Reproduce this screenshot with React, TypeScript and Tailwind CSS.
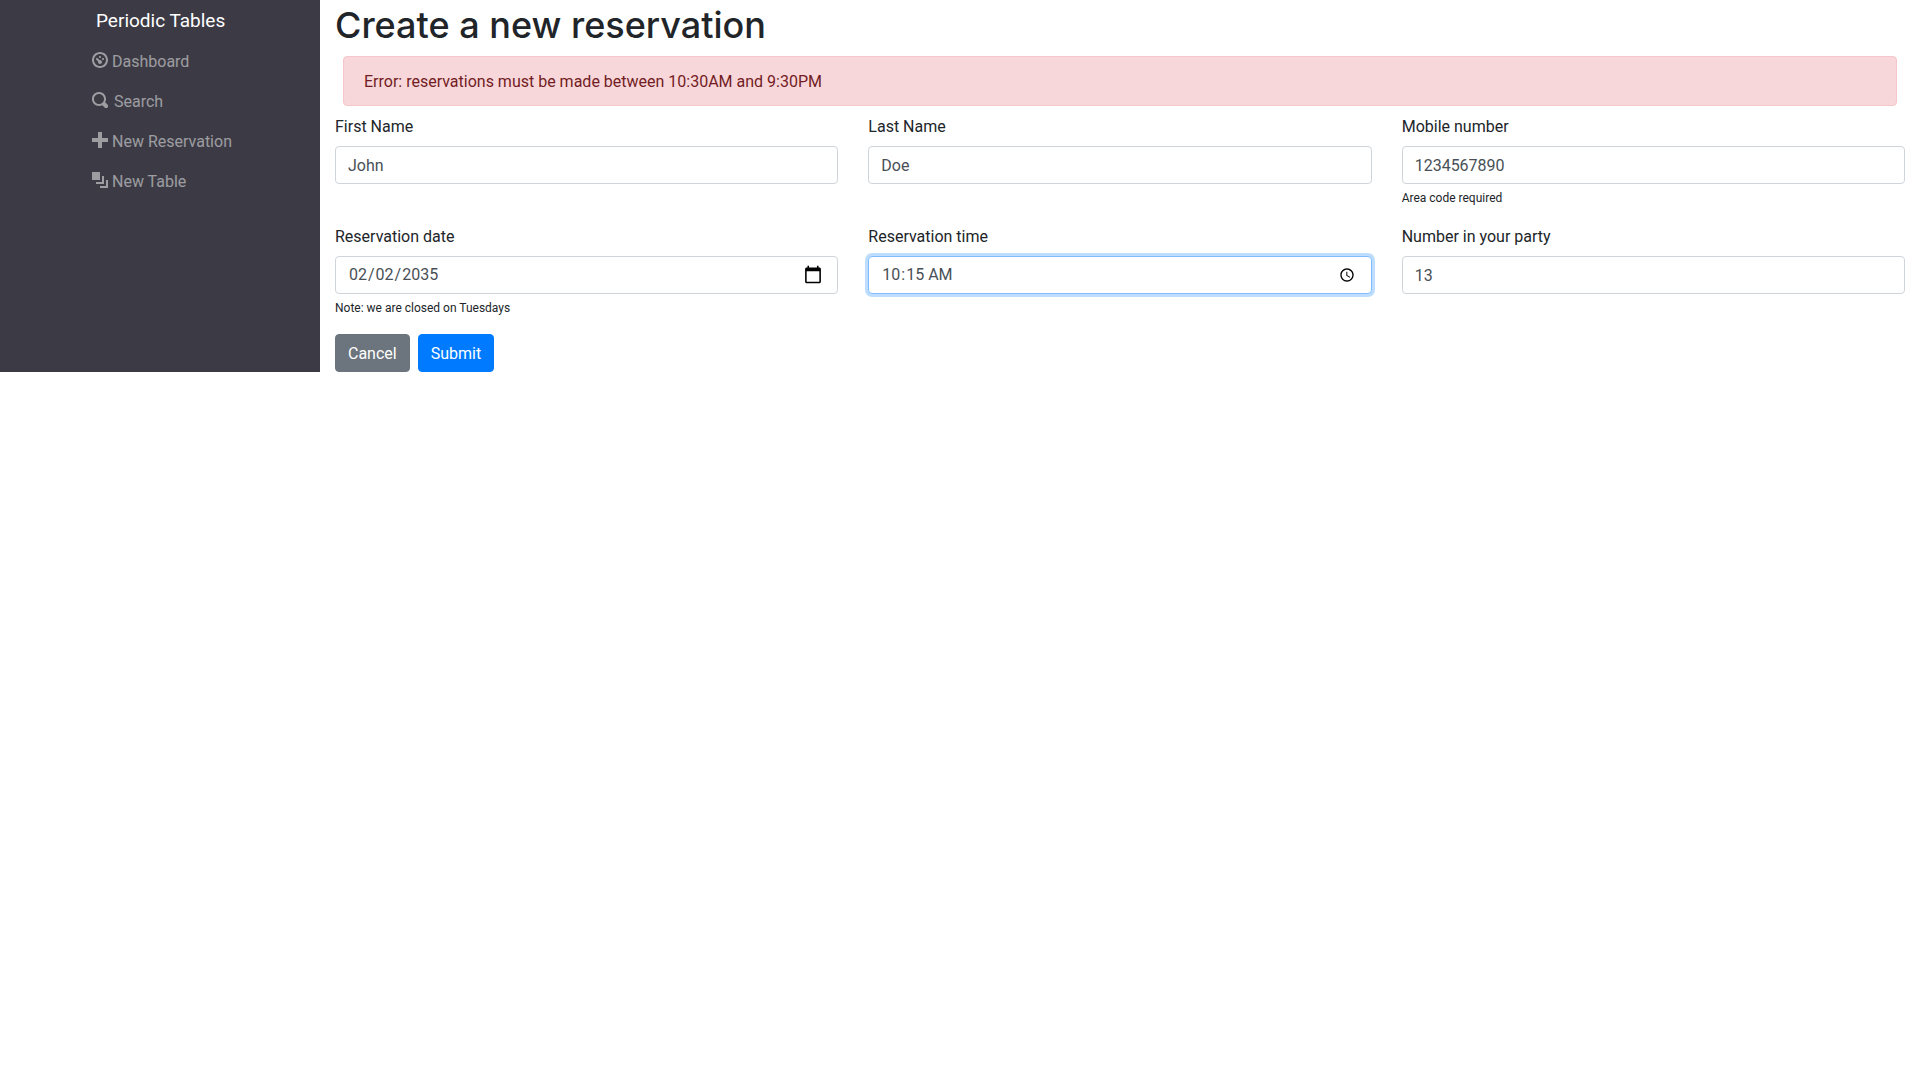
import type { InputHTMLAttributes, ReactNode } from "react";

const icons = {
  dashboard:
    "M4 0c-2.2 0-4 1.8-4 4s1.8 4 4 4 4-1.8 4-4-1.8-4-4-4zm0 1c1.66 0 3 1.34 3 3s-1.34 3-3 3-3-1.34-3-3 1.34-3 3-3zm0 1c-.28 0-.5.22-.5.5s.22.5.5.5.5-.22.5-.5-.22-.5-.5-.5zm-1.66 1a.5.5 0 0 0-.19.84l.91.91c-.02.08-.06.16-.06.25 0 .55.45 1 1 1s1-.45 1-1-.45-1-1-1c-.09 0-.17.04-.25.06l-.91-.91a.5.5 0 0 0-.44-.16.5.5 0 0 0-.06 0zm3.16 0c-.28 0-.5.22-.5.5s.22.5.5.5.5-.22.5-.5-.22-.5-.5-.5z",
  search:
    "M3.5 0c-1.93 0-3.5 1.57-3.5 3.5s1.57 3.5 3.5 3.5c.59 0 1.17-.14 1.66-.41a1 1 0 0 0 .13.13l1 1a1.02 1.02 0 1 0 1.44-1.44l-1-1a1 1 0 0 0-.16-.13c.27-.49.44-1.06.44-1.66 0-1.93-1.55-3.5-3.5-3.5zm0 1c1.39 0 2.5 1.11 2.5 2.5 0 .66-.24 1.27-.66 1.72-.01.01-.02.02-.03.03a1 1 0 0 0-.13.13c-.44.4-1.04.63-1.69.63-1.39 0-2.5-1.11-2.5-2.5s1.11-2.5 2.5-2.5z",
  plus: "M3 0v3h-3v2h3v3h2v-3h3v-2h-3v-3h-2z",
  layers:
    "M0 0v4h4v-4h-4zm5 2v3h-3v1h4v-4h-1zm2 2v3h-3v1h4v-4h-1z",
};

function NavItem({ icon, wide, children }: { icon: string; wide?: boolean; children: ReactNode }) {
  return (
    <li>
      <a
        href="#"
        className={`flex items-center pt-[9px] pb-[7px] leading-6 text-white/50 ${wide ? "gap-[6px]" : "gap-1"}`}
      >
        <svg viewBox="0 0 8 8" className="mb-1 size-4 fill-current" aria-hidden="true">
          <path d={icon} />
        </svg>
        {children}
      </a>
    </li>
  );
}

type FieldProps = InputHTMLAttributes<HTMLInputElement> & {
  id: string;
  label: string;
  note?: string;
  active?: boolean;
};

function Field({ id, label, note, active, ...input }: FieldProps) {
  return (
    <div>
      <label htmlFor={id} className="mb-[7px] block pt-px">
        {label}
      </label>
      <input
        id={id}
        {...input}
        className={`block h-[38px] w-full rounded border bg-white px-3 py-[6px] text-[#495057] outline-none ${
          active ? "border-[#80bdff] ring-3 ring-[#007bff]/25" : "border-[#ced4da]"
        } ${input.type === "date" ? "[&::-webkit-calendar-picker-indicator]:size-5" : ""}`}
      />
      {note && <small className="block pt-1 text-[12px] leading-5">{note}</small>}
    </div>
  );
}

export default function App() {
  return (
    <div className="flex items-stretch bg-white font-[Roboto,sans-serif] text-[16px] leading-6 text-[#212529]">
      <nav className="w-1/6 shrink-0 bg-[#3c3b45] pl-[92px]">
        <a href="#" className="block px-1 pt-[9px] pb-2 text-[19px] leading-6 text-white">
          Periodic Tables
        </a>
        <ul>
          <NavItem icon={icons.dashboard}>Dashboard</NavItem>
          <NavItem icon={icons.search} wide>
            Search
          </NavItem>
          <NavItem icon={icons.plus}>New Reservation</NavItem>
          <NavItem icon={icons.layers}>New Table</NavItem>
        </ul>
      </nav>
      <main className="min-w-0 grow px-[15px]">
        <h1 className="mb-[7px] pt-px font-[Inter,sans-serif] text-[36px] leading-12 font-medium">
          Create a new reservation
        </h1>
        <div
          role="alert"
          className="mx-2 mb-2 rounded border border-[#f5c6cb] bg-[#f8d7da] px-5 pt-[13px] pb-[11px] text-[#721c24]"
        >
          Error: reservations must be made between 10:30AM and 9:30PM
        </div>
        <form>
          <div className="grid grid-cols-3 gap-x-[30px] gap-y-4">
            <Field id="first_name" label="First Name" type="text" defaultValue="John" />
            <Field id="last_name" label="Last Name" type="text" defaultValue="Doe" />
            <Field
              id="mobile_number"
              label="Mobile number"
              type="tel"
              defaultValue="1234567890"
              note="Area code required"
            />
            <Field
              id="reservation_date"
              label="Reservation date"
              type="date"
              defaultValue="2035-02-02"
              note="Note: we are closed on Tuesdays"
            />
            <Field
              id="reservation_time"
              label="Reservation time"
              type="time"
              defaultValue="10:15"
              active
            />
            <Field id="people" label="Number in your party" type="text" inputMode="numeric" defaultValue="13" />
          </div>
          <div className="mt-4 flex gap-2">
            <button type="button" className="rounded border border-[#6c757d] bg-[#6c757d] px-3 pt-[7px] pb-[5px] text-white">
              Cancel
            </button>
            <button type="submit" className="rounded border border-[#007bff] bg-[#007bff] px-3 pt-[7px] pb-[5px] text-white">
              Submit
            </button>
          </div>
        </form>
      </main>
    </div>
  );
}
